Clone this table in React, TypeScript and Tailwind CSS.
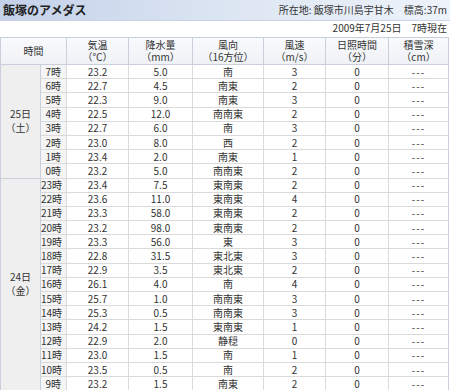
type Row = [string, string, string, string, string];

const day25: Row[] = [
  ["7時", "23.2", "5.0", "南", "3"],
  ["6時", "22.7", "4.5", "南東", "2"],
  ["5時", "22.3", "9.0", "南東", "3"],
  ["4時", "22.5", "12.0", "南南東", "2"],
  ["3時", "22.7", "6.0", "南", "3"],
  ["2時", "23.0", "8.0", "西", "2"],
  ["1時", "23.4", "2.0", "南東", "1"],
  ["0時", "23.2", "5.0", "南南東", "2"],
];

const day24: Row[] = [
  ["23時", "23.4", "7.5", "東南東", "2"],
  ["22時", "23.6", "11.0", "東南東", "4"],
  ["21時", "23.3", "58.0", "東南東", "2"],
  ["20時", "23.2", "98.0", "東南東", "2"],
  ["19時", "23.3", "56.0", "東", "3"],
  ["18時", "22.8", "31.5", "東北東", "3"],
  ["17時", "22.9", "3.5", "東北東", "2"],
  ["16時", "26.1", "4.0", "南", "4"],
  ["15時", "25.7", "1.0", "南南東", "3"],
  ["14時", "25.3", "0.5", "南南東", "3"],
  ["13時", "24.2", "1.5", "東南東", "1"],
  ["12時", "22.9", "2.0", "静穏", "0"],
  ["11時", "23.0", "1.5", "南", "1"],
  ["10時", "23.5", "0.5", "南", "2"],
  ["9時", "23.2", "1.5", "南東", "2"],
];

const headers = [
  ["気温", "（℃）"],
  ["降水量", "（mm）"],
  ["風向", "（16方位）"],
  ["風速", "（m/s）"],
  ["日照時間", "（分）"],
  ["積雪深", "（cm）"],
];

function DayRows({ rows, day, week }: { rows: Row[]; day: string; week: string }) {
  return (
    <>
      {rows.map((r, i) => (
        <tr key={r[0]} className="h-[14.2px]">
          {i === 0 && (
            <td
              rowSpan={rows.length}
              className="border border-[#c9d0db] bg-[#efefef] text-center leading-[14px]"
            >
              {day}
              <br />
              （{week}）
            </td>
          )}
          <td className="border border-[#dadada] border-l-[#c9d0db] bg-[#f5f5f5] pr-[5px] text-right">{r[0]}</td>
          <td className="border border-[#dadada] text-center">{r[1]}</td>
          <td className="border border-[#dadada] text-center">{r[2]}</td>
          <td className="border border-[#dadada] text-center">{r[3]}</td>
          <td className="border border-[#dadada] text-center">{r[4]}</td>
          <td className="border border-[#dadada] text-center">0</td>
          <td className="border border-[#dadada] border-r-[#c9d0db] text-center tracking-[1px]">---</td>
        </tr>
      ))}
    </>
  );
}

export default function App() {
  return (
    <div className="w-[450px] h-[390px] overflow-hidden bg-white text-[#333] font-['Noto_Sans_CJK_JP','Noto_Sans',sans-serif] text-[10px] leading-[12px] whitespace-nowrap">
      {/* タイトル */}
      <div className="flex h-[21px] items-center justify-between bg-gradient-to-r from-[#c3d1e9] via-[#dce5f2] to-[#eef3fa] pl-[3px] pr-[3px] border-b border-[#cbd5e5]">
        <h1 className="text-[12px] font-bold text-[#222]">飯塚のアメダス</h1>
        <span>所在地: 飯塚市川島宇甘木　標高:37m</span>
      </div>
      <div className="h-[16px] pt-[1px] pr-[3px] text-right">2009年7月25日　7時現在</div>

      {/* 表 */}
      <table className="w-[448px] table-fixed border-collapse">
        <colgroup>
          <col className="w-[40px]" />
          <col className="w-[26px]" />
          <col className="w-[62px]" />
          <col className="w-[64px]" />
          <col className="w-[71px]" />
          <col className="w-[62px]" />
          <col className="w-[63px]" />
          <col className="w-[60px]" />
        </colgroup>
        <thead>
          <tr className="h-[27px] bg-gradient-to-b from-[#f9fafc] to-[#eef1f6]">
            <th colSpan={2} className="border border-[#c9d0db] font-normal">時間</th>
            {headers.map(([a, b]) => (
              <th key={a} className="border border-[#c9d0db] font-normal leading-[12.5px]">
                <div>{a}</div>
                <div>{b}</div>
              </th>
            ))}
          </tr>
        </thead>
        <tbody>
          <DayRows rows={day25} day="25日" week="土" />
          <DayRows rows={day24} day="24日" week="金" />
        </tbody>
      </table>
    </div>
  );
}
